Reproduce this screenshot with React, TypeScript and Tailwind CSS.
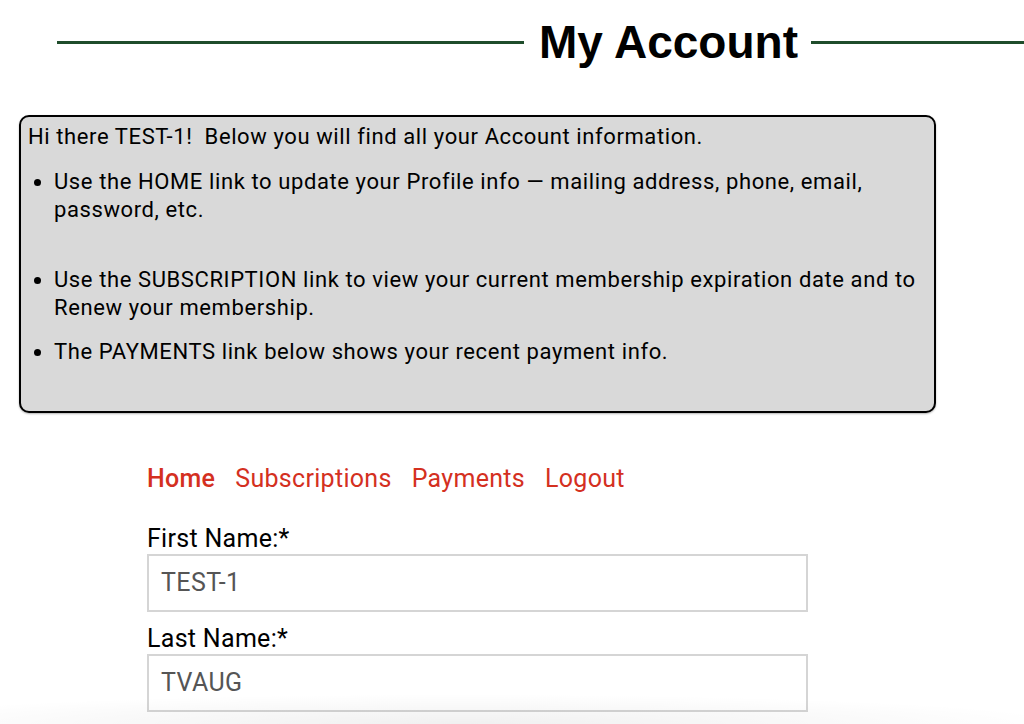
import React from "react";

export default function App() {
  return (
    <div
      className="relative min-h-[724px] w-[1024px] overflow-hidden bg-white"
      style={{ fontFamily: "Roboto, 'Liberation Sans', sans-serif" }}
    >
      {/* Title row */}
      <div className="flex items-center pt-[14px] pl-[57px]">
        <div className="h-[3px] w-[467px] bg-[#1f4d2b]" />
        <h1
          className="ml-[15px] mr-[13px] text-[46px] font-bold leading-[56px] text-black"
          style={{ fontFamily: "'Liberation Sans', Arial, sans-serif" }}
        >
          My Account
        </h1>
        <div className="h-[3px] flex-1 bg-[#1f4d2b]" />
      </div>

      {/* Info box */}
      <div className="mt-[45px] ml-[19px] h-[298px] w-[917px] rounded-[10px] border-2 border-black bg-[#d9d9d9] pl-[7px] pt-[6px] text-[22px] leading-[28px] tracking-[0.6px] text-black shadow-[0_1px_2px_rgba(0,0,0,0.3)]">
        <p>Hi there TEST-1!&nbsp; Below you will find all your Account information.</p>
        <ul className="mt-[17px] list-disc pl-[26px]">
          <li>
            Use the HOME link to update your Profile info — mailing address, phone, email,
            <br />
            password, etc.
          </li>
          <li className="mt-[42px]">
            Use the SUBSCRIPTION link to view your current membership expiration date and to
            <br />
            Renew your membership.
          </li>
          <li className="mt-[16px]">The PAYMENTS link below shows your recent payment info.</li>
        </ul>
      </div>

      {/* Nav + form */}
      <div className="ml-[147px] mt-[50px] w-[661px]">
        <nav className="flex gap-[20px] text-[25px] leading-[32px] tracking-[0.3px] text-[#d4301f]">
          <a className="font-medium">Home</a>
          <a>Subscriptions</a>
          <a>Payments</a>
          <a>Logout</a>
        </nav>

        <div className="mt-[29px]">
          <label className="block text-[25px] leading-[30px] tracking-[0.3px] text-black">First Name:*</label>
          <div className="flex h-[58px] items-center border-2 border-[#d5d5d5] bg-white pl-[12px] text-[25px] tracking-[0.4px] text-[#555]">
            TEST-1
          </div>
        </div>
        <div className="mt-[12px]">
          <label className="block text-[25px] leading-[30px] tracking-[0.3px] text-black">Last Name:*</label>
          <div className="flex h-[58px] items-center border-2 border-[#d5d5d5] bg-white pl-[12px] text-[25px] tracking-[0.4px] text-[#555]">
            TVAUG
          </div>
        </div>
      </div>

      {/* faint bottom shadow from the screenshot */}
      <div className="pointer-events-none absolute bottom-0 left-0 h-[30px] w-[1024px] bg-[radial-gradient(ellipse_60%_100%_at_45%_100%,rgba(0,0,0,0.06),rgba(0,0,0,0))]" />
    </div>
  );
}
